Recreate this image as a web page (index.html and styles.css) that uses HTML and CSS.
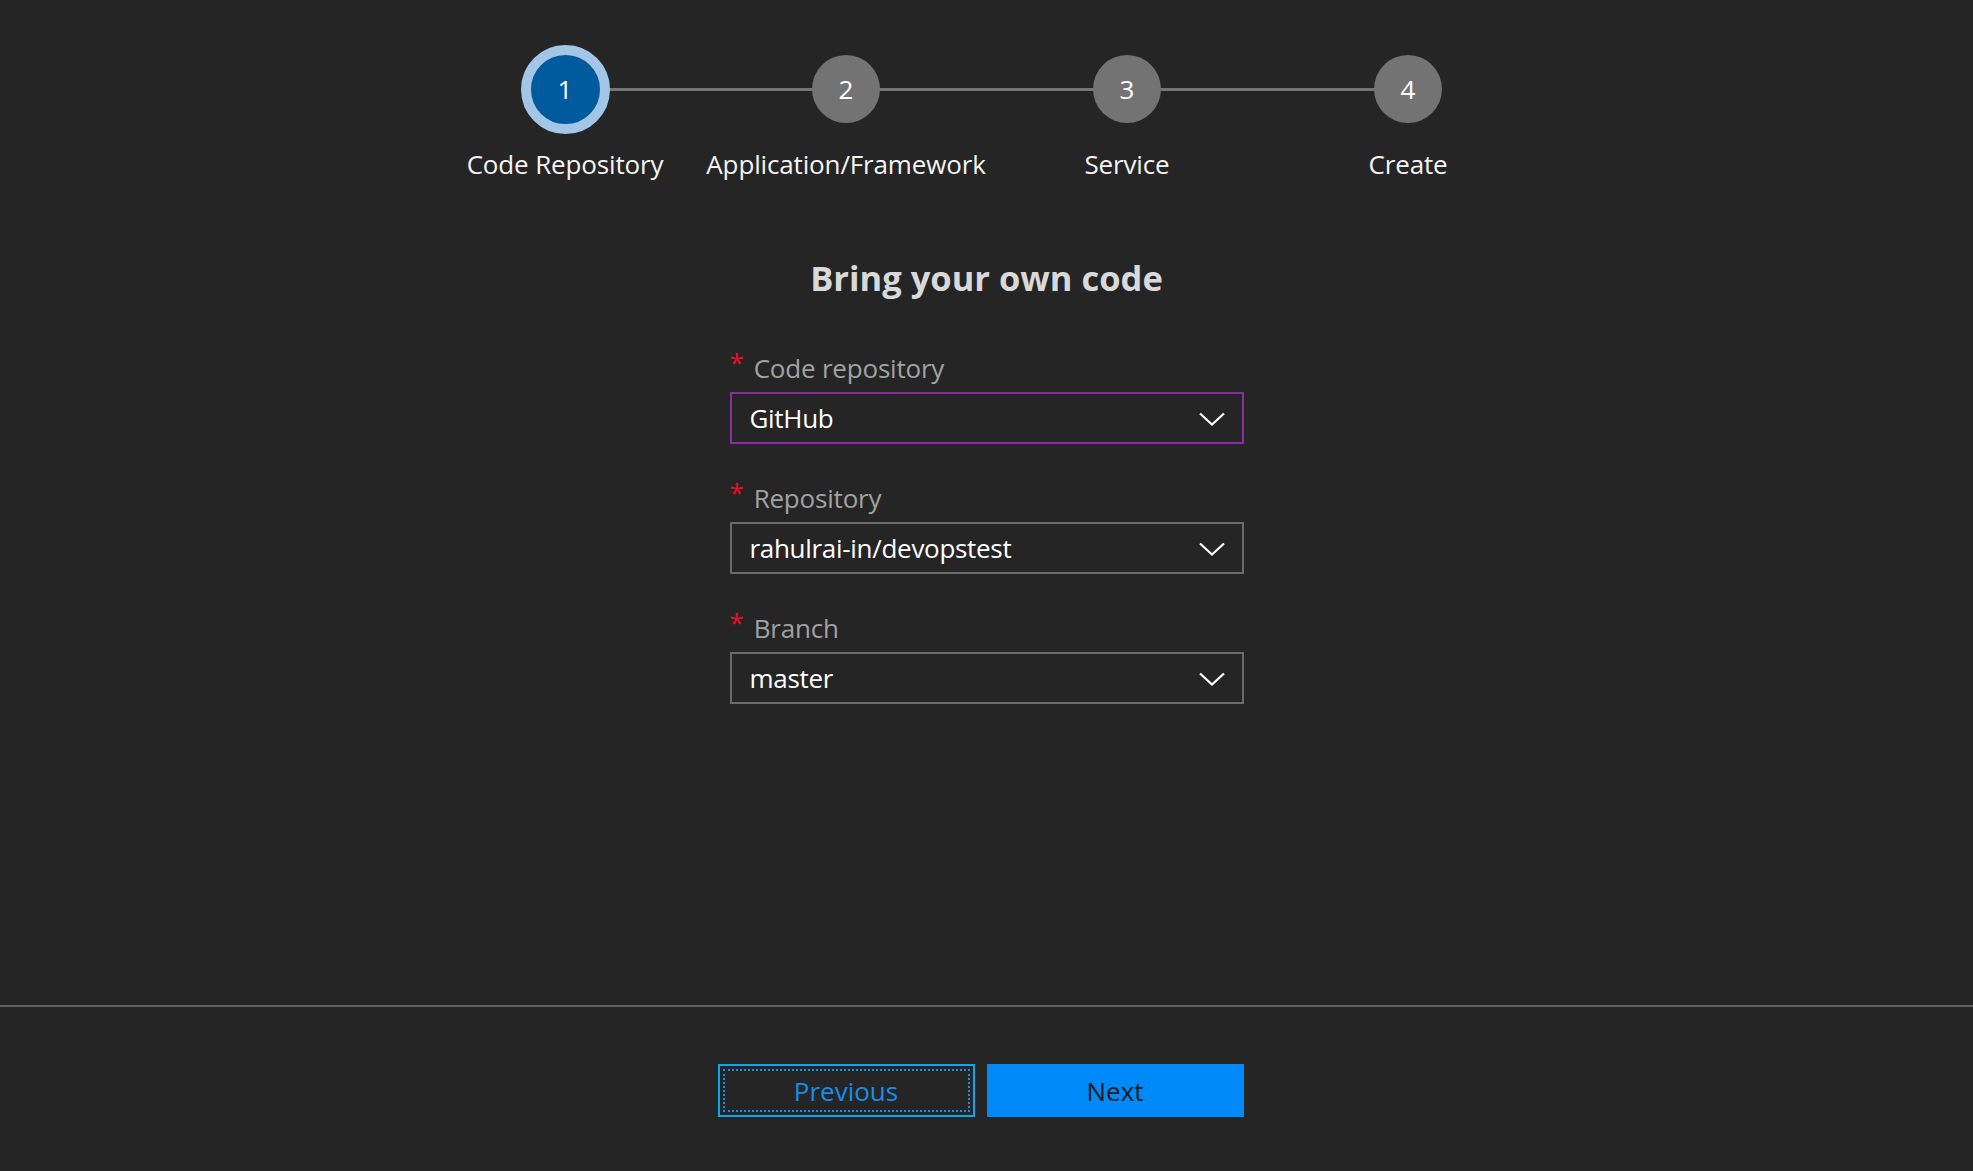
FILE: index.html
```html
<!DOCTYPE html>
<html lang="en">
<head>
<meta charset="utf-8">
<title>Bring your own code</title>
<link rel="stylesheet" href="styles.css">
</head>
<body>
<div class="page">
  <main class="main">
    <ol class="stepper">
      <li class="step is-active">
        <div class="dot-wrap"><span class="dot">1</span></div>
        <span class="step-label">Code Repository</span>
      </li>
      <li class="step">
        <div class="dot-wrap"><span class="dot">2</span></div>
        <span class="step-label">Application/Framework</span>
      </li>
      <li class="step">
        <div class="dot-wrap"><span class="dot">3</span></div>
        <span class="step-label">Service</span>
      </li>
      <li class="step">
        <div class="dot-wrap"><span class="dot">4</span></div>
        <span class="step-label">Create</span>
      </li>
    </ol>

    <h1 class="title">Bring your own code</h1>

    <form class="form">
      <div class="field">
        <label class="field-label"><span class="req">*</span>Code repository</label>
        <div class="select is-focused">
          <span class="select-value">GitHub</span>
          <svg class="chevron" width="26" height="14" viewBox="0 0 26 14"><path d="M1 1.5 L13 12.5 L25 1.5" fill="none" stroke="#ffffff" stroke-width="2.2"/></svg>
        </div>
      </div>
      <div class="field">
        <label class="field-label"><span class="req">*</span>Repository</label>
        <div class="select">
          <span class="select-value">rahulrai-in/devopstest</span>
          <svg class="chevron" width="26" height="14" viewBox="0 0 26 14"><path d="M1 1.5 L13 12.5 L25 1.5" fill="none" stroke="#ffffff" stroke-width="2.2"/></svg>
        </div>
      </div>
      <div class="field">
        <label class="field-label"><span class="req">*</span>Branch</label>
        <div class="select">
          <span class="select-value">master</span>
          <svg class="chevron" width="26" height="14" viewBox="0 0 26 14"><path d="M1 1.5 L13 12.5 L25 1.5" fill="none" stroke="#ffffff" stroke-width="2.2"/></svg>
        </div>
      </div>
    </form>
  </main>

  <footer class="footer">
    <div class="actions">
      <button class="btn btn-secondary" type="button">Previous</button>
      <button class="btn btn-primary" type="button">Next</button>
    </div>
  </footer>
</div>
</body>
</html>
```

FILE: styles.css
```css
* { box-sizing: border-box; }

html, body {
  margin: 0;
  padding: 0;
  background: #252525;
}

body {
  font-family: "Open Sans", "Noto Sans", "Liberation Sans", sans-serif;
  color: #ffffff;
}

.page {
  height: 100vh;
  display: flex;
  flex-direction: column;
}

.main {
  flex: 1;
  display: flex;
  flex-direction: column;
  align-items: center;
}

/* Stepper */
.stepper {
  list-style: none;
  margin: 0;
  padding: 44px 0 0 0;
  display: flex;
  justify-content: center;
}

.step {
  width: 281px;
  display: flex;
  flex-direction: column;
  align-items: center;
}

.dot-wrap {
  position: relative;
  width: 100%;
  height: 90px;
  display: flex;
  align-items: center;
  justify-content: center;
}

.step + .step .dot-wrap::before {
  content: "";
  position: absolute;
  right: 50%;
  width: 100%;
  top: 44px;
  height: 3px;
  background: #767676;
}

.dot {
  position: relative;
  z-index: 1;
  width: 68px;
  height: 68px;
  border-radius: 50%;
  background: #737373;
  color: #ffffff;
  font-size: 26px;
  display: flex;
  align-items: center;
  justify-content: center;
  line-height: 1;
}

.is-active .dot {
  width: 89px;
  height: 89px;
  background: #005a9e;
  border: 10.5px solid #a3c6e6;
}

.step-label {
  margin-top: 12px;
  font-size: 26px;
  line-height: 36px;
  letter-spacing: -0.15px;
  color: #f4f4f4;
  white-space: nowrap;
}

/* Title */
.title {
  margin: 73px 0 0 0;
  font-size: 34.5px;
  line-height: 46px;
  font-weight: 700;
  color: #d9d9d9;
}

/* Form */
.form {
  width: 514px;
  margin-top: 50px;
}

.field {
  margin-bottom: 37px;
}

.field-label {
  display: flex;
  align-items: flex-start;
  font-size: 26px;
  line-height: 34px;
  letter-spacing: -0.2px;
  color: #a2a2a2;
  margin-bottom: 7px;
}

.req {
  color: #e81123;
  font-size: 26px;
  line-height: 26px;
  margin: -2px 10px 0 0;
}

.select {
  height: 52px;
  border: 2px solid #6b6b6b;
  display: flex;
  align-items: center;
  justify-content: space-between;
  padding: 0 17px 0 18px;
}

.select.is-focused {
  border-color: #8a2ca6;
}

.select-value {
  font-size: 26px;
  line-height: 46px;
  letter-spacing: -0.3px;
  color: #ffffff;
}

.chevron {
  display: block;
  margin-top: 1px;
}

/* Footer */
.footer {
  border-top: 2px solid #5f5f5f;
  padding: 57px 12px 0 0;
  height: 166px;
}

.actions {
  display: flex;
  justify-content: center;
  gap: 12px;
}

.btn {
  width: 257px;
  height: 53px;
  font-family: inherit;
  font-size: 26px;
  line-height: 1;
  padding: 0;
  cursor: pointer;
}

.btn-secondary {
  background: transparent;
  color: #168de9;
  border: 2px solid #0aa8ee;
  outline: 2px dotted #1a8fe9;
  outline-offset: -7px;
}

.btn-primary {
  background: #0089f8;
  color: #1c1c1c;
  border: none;
}
```
